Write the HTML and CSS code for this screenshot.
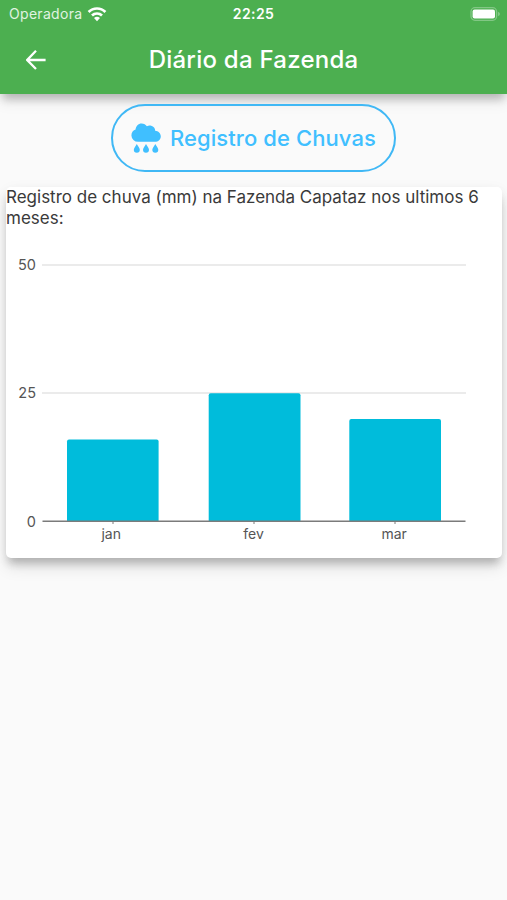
FILE: index.html
```html
<!DOCTYPE html>
<html lang="pt-BR">
<head>
  <meta charset="UTF-8">
  <meta name="viewport" content="width=device-width, initial-scale=1.0">
  <title>Diário da Fazenda</title>
  <link rel="stylesheet" href="styles.css">
</head>
<body>
  <header class="app-header">
    <div class="status-bar">
      <div class="carrier">
        <span>Operadora</span>
        <svg class="wifi" viewBox="0 0 20 16">
          <path d="M1.6 6a11.8 11.8 0 0 1 16.8 0M5 9.5a7.2 7.2 0 0 1 10 0" fill="none" stroke="#fff" stroke-width="2.7"/>
          <path d="M10 15.2l-3-3.1a4.3 4.3 0 0 1 6 0z" fill="#fff"/>
        </svg>
      </div>
      <span class="clock">22:25</span>
      <svg class="battery" viewBox="0 0 31 14">
        <rect x="1" y="0.7" width="25.6" height="12.6" rx="4" fill="none" stroke="#82c785" stroke-width="1.3"/>
        <rect x="2.6" y="2.4" width="22.4" height="9.2" rx="2" fill="#fff"/>
        <path d="M28 4.8v4.4q2-.7 2-2.2t-2-2.2z" fill="#82c785"/>
      </svg>
    </div>
    <div class="toolbar">
      <svg class="back" viewBox="0 0 20 20">
        <path d="M10 .8L1.2 10l8.8 9M1.4 10h18.2" fill="none" stroke="#fff" stroke-width="2.3"/>
      </svg>
      <h1 class="title">Diário da Fazenda</h1>
    </div>
  </header>

  <main class="content">
    <button class="rain-button">
      <svg class="rain-icon" viewBox="0 0 30 30">
        <path d="M7 18.8a6.7 6.7 0 0 1-6.600-6.400c0-3 1.900-5.200 4.200-5.900C4.800 3 7.300.4 10.600.4c2.300 0 4.200 1.100 5.300 2.900 1.400-1 3-.9 4.300-.6 2.400.6 4 2.500 4 5 3.100.2 5.600 2.500 5.600 5.500 0 3.200-2.500 5.600-5.800 5.600z"/>
        <path id="drop" d="M5.8 21c1 2.300 3 4 3 5.700a3 3 0 0 1-6 0c0-1.700 2-3.400 3-5.700z"/>
        <use href="#drop" x="9.2"/>
        <use href="#drop" x="18.5"/>
      </svg>
      <span class="rain-label">Registro de Chuvas</span>
    </button>

    <section class="card">
      <p class="card-text">Registro de chuva (mm) na Fazenda Capataz nos ultimos 6 meses:</p>
      <svg class="chart" viewBox="0 0 496 330">
        <g class="grid">
          <line x1="36" y1="37" x2="460" y2="37"/>
          <line x1="36" y1="165" x2="460" y2="165"/>
        </g>
        <g class="bars">
          <path d="M61 293v-79.500q0-2 2-2h87.600q2 0 2 2V293z"/>
          <path d="M202.700 293V167.300q0-2 2-2h87.800q2 0 2 2V293z"/>
          <path d="M343.300 293V193q0-2 2-2H433q2 0 2 2V293z"/>
        </g>
        <g class="axis">
          <line x1="36.5" y1="293.2" x2="459.5" y2="293.2"/>
          <path class="ticks" d="M107 293v3M248 293v3M389 293v3"/>
        </g>
        <g class="values">
          <text x="30" y="42">50</text>
          <text x="30" y="170">25</text>
          <text x="30" y="298.5">0</text>
        </g>
        <g class="months">
          <text x="105.2" y="310.5">jan</text>
          <text x="247.5" y="310.5">fev</text>
          <text x="388.2" y="310.5">mar</text>
        </g>
      </svg>
    </section>
  </main>
</body>
</html>
```

FILE: styles.css
```css
* {
  box-sizing: border-box;
}
body {
  margin: 0;
  min-height: 100vh;
  overflow: hidden;
  background: #fafafa;
  color: #3a3a3a;
  font-family: Inter, Roboto, "Liberation Sans", sans-serif;
}
.app-header {
  height: 94px;
  background: #4caf50;
  box-shadow: 0 8px 8px -3px rgba(0, 0, 0, 0.2), 0 7px 14px rgba(0, 0, 0, 0.1);
  color: #fff;
}
.status-bar {
  display: grid;
  grid-template-columns: 1fr auto 1fr;
  align-items: center;
  height: 27px;
  padding: 0 6px 0 9px;
  font-size: 14px;
}
.carrier {
  display: flex;
  align-items: center;
  gap: 5px;
  color: #e0f3e1;
  letter-spacing: 0.3px;
}
.wifi {
  width: 20px;
  height: 16px;
}
.clock {
  padding-right: 3px;
  font-weight: 600;
  letter-spacing: 0.4px;
}
.battery {
  justify-self: end;
  width: 31px;
  height: 14px;
}
.toolbar {
  display: grid;
  grid-template-columns: 46px 1fr 46px;
  align-items: center;
  height: 66px;
}
.back {
  justify-self: end;
  width: 20px;
  height: 20px;
}
.title {
  margin: 0;
  text-align: center;
  font-size: 24px;
  font-weight: 500;
  line-height: 30px;
  letter-spacing: 0.24px;
}
.content {
  display: flex;
  flex-direction: column;
  align-items: center;
  padding: 10px 5px 0 6px;
}
.rain-button {
  display: flex;
  align-items: center;
  gap: 9px;
  width: 285px;
  height: 68px;
  margin-right: 1px;
  padding: 0 0 0 18px;
  border: 2px solid #40b8f5;
  border-radius: 34px;
  background: transparent;
  color: #40bfff;
  font-family: inherit;
}
.rain-icon {
  width: 30px;
  height: 30px;
  fill: #40bfff;
}
.rain-label {
  font-size: 22px;
  font-weight: 500;
  letter-spacing: 0.08px;
  white-space: nowrap;
}
.card {
  width: 496px;
  height: 371px;
  margin-top: 15px;
  border-radius: 5px;
  background: #fff;
  box-shadow: 0 8px 8px -3px rgba(0, 0, 0, 0.2), 0 10px 15px rgba(0, 0, 0, 0.1), 0 3px 14px rgba(0, 0, 0, 0.05);
}
.card-text {
  margin: 0;
  font-size: 17px;
  line-height: 20.5px;
}
.chart {
  display: block;
  width: 496px;
  height: 330px;
}
.grid {
  stroke: #e4e4e4;
  stroke-width: 1.5;
}
.bars {
  fill: #00bcdb;
}
.axis {
  fill: none;
  stroke: #7b7b7b;
  stroke-width: 1.5;
}
.ticks {
  stroke-width: 1;
}
.values,
.months {
  fill: #555;
  font-size: 14px;
}
.values {
  font-size: 14.5px;
  text-anchor: end;
}
.months {
  text-anchor: middle;
}
```
